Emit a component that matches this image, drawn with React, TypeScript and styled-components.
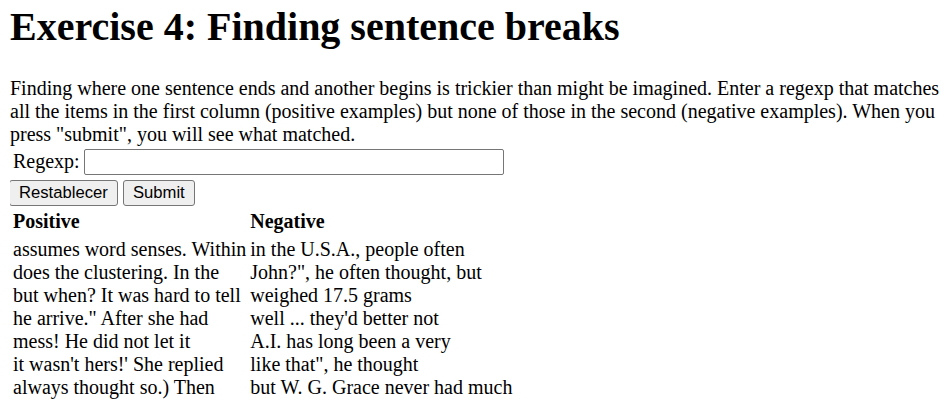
import React, { useState } from 'react'
import styled, { createGlobalStyle } from 'styled-components'

const GlobalStyle = createGlobalStyle`
  html {
    overflow: hidden;
  }
  body {
    margin: 3px 10px 0;
    background: #fff;
    color: #000;
    font-family: "Liberation Serif", "Times New Roman", serif;
    font-size: 20px;
  }
`

const Title = styled.h1`
  margin: 0 0 26.8px;
  font-size: 40px;
  font-weight: bold;
`

const Intro = styled.div`
  margin: 0;
`

const FieldRow = styled.div`
  display: grid;
  grid-template-columns: auto 420px;
  column-gap: 4px;
  align-items: center;
  width: fit-content;
  padding: 3px 3px 4px;
`

const TextInput = styled.input`
  box-sizing: border-box;
  width: 420px;
  height: 26px;
  margin: 0;
  padding: 1px 2px;
  border: 1px solid #767676;
  border-radius: 2px;
  font-family: "Liberation Sans", Arial, sans-serif;
  font-size: 16.67px;
`

const ButtonRow = styled.div`
  display: flex;
  gap: 5px;
  height: 27px;
  margin-left: -1px;
  padding-top: 1.5px;
`

const Button = styled.button`
  box-sizing: border-box;
  height: 26px;
  margin: 0;
  padding: 1px 9px;
  border: 1px solid #767676;
  border-radius: 3px;
  background: #efefef;
  color: #000;
  font-family: "Liberation Sans", Arial, sans-serif;
  font-size: 16.67px;
`

const Examples = styled.div`
  display: grid;
  grid-template-columns: auto auto;
  justify-content: start;
  column-gap: 4px;
  row-gap: 5px;
  padding: 3px;
`

const HeadCell = styled.div`
  font-weight: bold;
  text-align: left;
`

const Line = styled.div`
  white-space: nowrap;
`

const positives = [
  'assumes word senses. Within',
  'does the clustering. In the',
  'but when? It was hard to tell',
  'he arrive." After she had',
  'mess! He did not let it',
  "it wasn't hers!' She replied",
  'always thought so.) Then',
]

const negatives = [
  'in the U.S.A., people often',
  'John?", he often thought, but',
  'weighed 17.5 grams',
  "well ... they'd better not",
  'A.I. has long been a very',
  'like that", he thought',
  'but W. G. Grace never had much',
]

const App: React.FC = () => {
  const [regexp, setRegexp] = useState('')

  return (
    <>
      <GlobalStyle />
      <Title>Exercise 4: Finding sentence breaks</Title>
      <Intro>
        Finding where one sentence ends and another begins is trickier than might be imagined. Enter a regexp
        that matches all the items in the first column (positive examples) but none of those in the second
        (negative examples). When you press "submit", you will see what matched.
      </Intro>
      <form onSubmit={(e) => e.preventDefault()}>
        <FieldRow>
          <span>Regexp:</span>
          <TextInput type="text" value={regexp} onChange={(e) => setRegexp(e.target.value)} />
        </FieldRow>
        <ButtonRow>
          <Button type="reset" onClick={() => setRegexp('')}>Restablecer</Button>
          <Button type="submit">Submit</Button>
        </ButtonRow>
      </form>
      <Examples>
        <HeadCell>Positive</HeadCell>
        <HeadCell>Negative</HeadCell>
        <div>
          {positives.map((p) => (
            <Line key={p}>{p}</Line>
          ))}
        </div>
        <div>
          {negatives.map((n) => (
            <Line key={n}>{n}</Line>
          ))}
        </div>
      </Examples>
    </>
  )
}

export default App
